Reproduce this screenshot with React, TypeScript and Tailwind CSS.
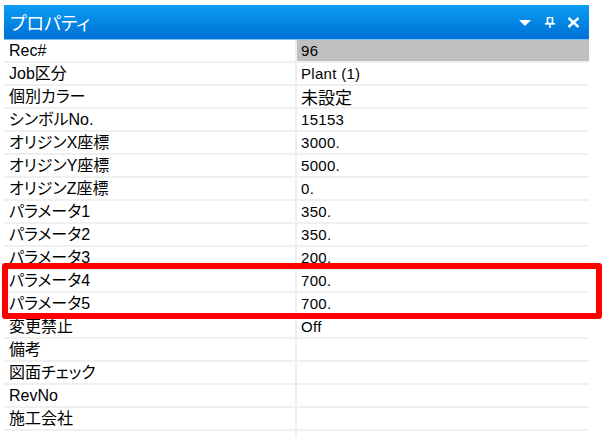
import React from 'react';

type Row = { label: string; value?: string; wide?: boolean; selected?: boolean };

const rows: Row[] = [
  { label: 'Rec#', value: '96', selected: true },
  { label: 'Job区分', value: 'Plant (1)' },
  { label: '個別カラー', value: '未設定', wide: true },
  { label: 'シンボルNo.', value: '15153' },
  { label: 'オリジンX座標', value: '3000.' },
  { label: 'オリジンY座標', value: '5000.' },
  { label: 'オリジンZ座標', value: '0.' },
  { label: 'パラメータ1', value: '350.' },
  { label: 'パラメータ2', value: '350.' },
  { label: 'パラメータ3', value: '200.' },
  { label: 'パラメータ4', value: '700.' },
  { label: 'パラメータ5', value: '700.' },
  { label: '変更禁止', value: 'Off' },
  { label: '備考' },
  { label: '図面チェック' },
  { label: 'RevNo' },
  { label: '施工会社' },
  { label: '' },
];

const TitleIcons: React.FC = () => (
  <div className="flex items-center h-full pr-[9px] gap-0">
    <svg width="14" height="8" viewBox="0 0 14 8" className="mr-[13px] mt-[2px]">
      <polygon points="1,1 13,1 7,7" fill="#fff" />
    </svg>
    <svg width="10" height="11" viewBox="0 0 10 11" className="mr-[12px]">
      <rect x="2.5" y="0.5" width="5" height="6" fill="none" stroke="#fff" strokeWidth="1.6" />
      <rect x="0" y="6" width="10" height="1.6" fill="#fff" />
      <rect x="4.2" y="7" width="1.6" height="4" fill="#fff" />
    </svg>
    <svg width="13" height="11" viewBox="0 0 13 11">
      <path d="M1.5 1 L11.5 10 M11.5 1 L1.5 10" stroke="#fff" strokeWidth="2.4" />
    </svg>
  </div>
);

export default function App() {
  return (
    <div className="relative w-[610px] h-[438px] overflow-hidden bg-white font-['Liberation_Sans','Noto_Sans_CJK_JP',sans-serif] text-black">
      <div className="ml-[4px] mt-[5px] w-[585px]">
        <div className="h-[35px] flex items-center justify-between bg-gradient-to-b from-[#0c9df6] to-[#0070d4] border-b border-[#7cc0ee]">
          <span className="pl-[6px] text-[18px] text-white font-['Noto_Sans_CJK_JP',sans-serif] [font-feature-settings:'palt'] leading-none">
            プロパティ
          </span>
          <TitleIcons />
        </div>
        {rows.map((r, i) => (
          <div key={i} className="flex h-[23px] border-b-2 border-[#f0f0f0]">
            <div className="w-[293px] shrink-0 border-r-2 border-[#eeeeee] pl-[5px] flex items-center text-[16px] leading-none [font-feature-settings:'palt']">
              {r.label}
            </div>
            <div
              className={`flex-1 flex items-center pl-[4px] leading-none ${
                r.wide
                  ? 'text-[17px] font-["Noto_Sans_CJK_JP",sans-serif]'
                  : 'text-[15px] tracking-[0.3px]'
              } ${r.selected ? 'bg-[#c0c0c0]' : ''}`}
            >
              {r.value}
            </div>
          </div>
        ))}
      </div>
      <div className="absolute left-[2px] top-[263px] w-[600px] h-[56px] border-[6px] border-[#ff0000] rounded-[3px]" />
    </div>
  );
}
